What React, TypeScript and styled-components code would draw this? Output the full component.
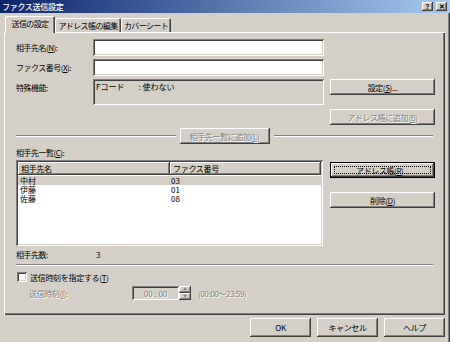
import React from "react";
import styled, { createGlobalStyle, css } from "styled-components";

const FACE = "#d4d0c8";
const SHADOW = "#808080";
const DARK = "#404040";

const GlobalStyle = createGlobalStyle`
	html, body {
		margin: 0;
		padding: 0;
		background: ${FACE};
	}
	body {
		font-family: "Noto Sans CJK JP", "Liberation Sans", sans-serif;
		font-size: 8px;
		color: #000;
	}
	* {
		box-sizing: border-box;
	}
`;

const raised = css`
	background: ${FACE};
	box-shadow: inset -1px -1px ${DARK}, inset 1px 1px #fff, inset -2px -2px ${SHADOW},
		inset 2px 2px ${FACE};
`;

const sunken = css`
	box-shadow: inset 1px 1px ${SHADOW}, inset -1px -1px #fff, inset 2px 2px ${DARK},
		inset -2px -2px ${FACE};
`;

const disabledText = css`
	color: ${SHADOW};
	text-shadow: 1px 1px 0 #fff;
`;

const App = () => {
	const entries = [
		{ name: "中村", fax: "03" },
		{ name: "伊藤", fax: "01" },
		{ name: "佐藤", fax: "08" },
	];
	return (
		<>
			<GlobalStyle />
			<Window>
				<TitleBar>
					<Title>ファクス送信設定</Title>
					<Caps>
						<CapButton>?</CapButton>
						<CapButton>✕</CapButton>
					</Caps>
				</TitleBar>
				<Body>
					<Tabs>
						<Tab $active $w={50}>
							送信の設定
						</Tab>
						<Tab $w={66}>アドレス帳の編集</Tab>
						<Tab $w={50}>カバーシート</Tab>
					</Tabs>
					<Panel>
						<TopSection>
							<Fields>
								<Label>
									相手先名(<u>N</u>):
								</Label>
								<Field />
								<Label>
									ファクス番号(<u>X</u>):
								</Label>
								<Field />
								<Label $top>特殊機能:</Label>
								<StaticBox>
									<span>Fコード</span>
									<span>: 使わない</span>
								</StaticBox>
							</Fields>
							<SideButtons $top={40}>
								<Button>
									設定(<u>S</u>)...
								</Button>
								<Button $disabled>
									アドレス帳に追加(<u>B</u>)
								</Button>
							</SideButtons>
						</TopSection>
						<AddRow>
							<Rule />
							<Button $disabled $w={90}>
								相手先一覧に追加(<u>L</u>)
							</Button>
							<Rule />
						</AddRow>
						<ListLabel>
							相手先一覧(<u>C</u>):
						</ListLabel>
						<ListSection>
							<ListBox>
								<Header>
									<HeaderCell $w={152}>相手先名</HeaderCell>
									<HeaderCell>ファクス番号</HeaderCell>
								</Header>
								{entries.map((e, i) => (
									<Row key={e.name} $selected={i === 0}>
										<Cell $w={152}>{e.name}</Cell>
										<Cell>{e.fax}</Cell>
									</Row>
								))}
							</ListBox>
							<SideButtons $top={2}>
								<Button $focused>
									アドレス帳(<u>R</u>)...
								</Button>
								<Button>
									削除(<u>D</u>)
								</Button>
							</SideButtons>
						</ListSection>
						<CountRow>
							<CountLabel>相手先数:</CountLabel>
							<span>3</span>
						</CountRow>
						<Separator />
						<CheckRow>
							<CheckBox />
							<span>
								送信時刻を指定する(<u>T</u>)
							</span>
						</CheckRow>
						<TimeRow>
							<TimeLabel>
								送信時刻(<u>I</u>):
							</TimeLabel>
							<TimeField>00 : 00</TimeField>
							<Spinner>
								<SpinButton>▲</SpinButton>
								<SpinButton>▼</SpinButton>
							</Spinner>
							<Range>(00:00～23:59)</Range>
						</TimeRow>
					</Panel>
					<Footer>
						<Button $w={61} $h={19}>
							OK
						</Button>
						<Button $w={61} $h={19}>
							キャンセル
						</Button>
						<Button $w={61} $h={19}>
							ヘルプ
						</Button>
					</Footer>
				</Body>
			</Window>
		</>
	);
};

const Window = styled.div`
	width: 450px;
	height: 342px;
	background: ${FACE};
	overflow: hidden;
	box-shadow: inset -1px 0 ${DARK}, inset -2px 0 ${SHADOW};
`;

const TitleBar = styled.div`
	height: 13px;
	display: flex;
	align-items: center;
	justify-content: space-between;
	padding: 0 3px 0 2px;
	background: linear-gradient(to right, #0a246a, #a6caf0);
`;

const Title = styled.div`
	color: #fff;
	font-weight: 500;
	line-height: 13px;
	letter-spacing: -0.3px;
`;

const Caps = styled.div`
	display: flex;
	gap: 3px;
`;

const CapButton = styled.div`
	${raised};
	width: 11px;
	height: 9px;
	display: flex;
	align-items: center;
	justify-content: center;
	font-family: "Liberation Sans", sans-serif;
	font-size: 7px;
	font-weight: bold;
	line-height: 9px;
`;

const Body = styled.div`
	padding: 3px 5px 0 4px;
`;

const Tabs = styled.div`
	display: flex;
	align-items: flex-end;
	height: 16px;
	padding-left: 1px;
	position: relative;
	z-index: 1;
`;

const Tab = styled.div<{ $active?: boolean; $w: number }>`
	width: ${(p) => p.$w}px;
	height: ${(p) => (p.$active ? 17 : 14)}px;
	margin-bottom: ${(p) => (p.$active ? -1 : 0)}px;
	display: flex;
	align-items: center;
	justify-content: center;
	background: ${FACE};
	border-radius: 2px 2px 0 0;
	box-shadow: inset 1px 1px #fff, inset -1px 0 ${DARK}, inset -2px 0 ${SHADOW};
	white-space: nowrap;
	letter-spacing: -0.6px;
	padding-bottom: ${(p) => (p.$active ? 2 : 0)}px;
`;

const Panel = styled.div`
	height: 283px;
	padding: 7px 10px 0 12px;
	background: ${FACE};
	box-shadow: inset 1px 1px #fff, inset -1px -1px ${DARK}, inset -2px -2px ${SHADOW};
`;

const TopSection = styled.div`
	display: flex;
	align-items: flex-start;
`;

const Fields = styled.div`
	width: 308px;
	display: grid;
	grid-template-columns: 77px 231px;
	grid-template-rows: 17px 17px 26px;
	row-gap: 3px;
`;

const Label = styled.div<{ $top?: boolean }>`
	display: flex;
	align-items: ${(p) => (p.$top ? "flex-start" : "center")};
	padding-top: ${(p) => (p.$top ? 3 : 0)}px;
	white-space: nowrap;
	letter-spacing: -0.5px;
`;

const Field = styled.div`
	${sunken};
	background: #fff;
`;

const StaticBox = styled.div`
	${sunken};
	display: flex;
	gap: 14px;
	padding: 3px 3px;
	line-height: 10px;
`;

const SideButtons = styled.div<{ $top: number }>`
	margin-left: auto;
	padding-top: ${(p) => p.$top}px;
	width: 105px;
	display: flex;
	flex-direction: column;
	gap: 14px;
`;

const Button = styled.div<{
	$disabled?: boolean;
	$focused?: boolean;
	$w?: number;
	$h?: number;
}>`
	${raised};
	position: relative;
	width: ${(p) => (p.$w ? `${p.$w}px` : "100%")};
	height: ${(p) => p.$h ?? 16}px;
	display: flex;
	align-items: center;
	justify-content: center;
	white-space: nowrap;
	letter-spacing: -0.4px;
	flex-shrink: 0;
	${(p) => p.$disabled && disabledText};
	${(p) =>
		p.$focused &&
		css`
			box-shadow: inset 0 0 0 1px #000, inset -2px -2px ${DARK}, inset 2px 2px #fff,
				inset -3px -3px ${SHADOW};
			&::after {
				content: "";
				position: absolute;
				inset: 4px;
				border: 1px dotted #000;
			}
		`};
`;

const AddRow = styled.div`
	margin-top: 3px;
	height: 16px;
	display: flex;
	align-items: center;
	gap: 4px;
	padding-right: 2px;
`;

const Rule = styled.div`
	flex: 1;
	height: 2px;
	border-top: 1px solid ${SHADOW};
	border-bottom: 1px solid #fff;
`;

const ListLabel = styled.div`
	height: 16px;
	display: flex;
	align-items: center;
	letter-spacing: -0.5px;
`;

const ListSection = styled.div`
	display: flex;
	align-items: flex-start;
`;

const ListBox = styled.div`
	${sunken};
	width: 307px;
	height: 86px;
	padding: 2px;
	background: #fff;
	overflow: hidden;
`;

const Header = styled.div`
	display: flex;
	height: 13px;
`;

const HeaderCell = styled.div<{ $w?: number }>`
	${raised};
	width: ${(p) => (p.$w ? `${p.$w}px` : "auto")};
	flex: ${(p) => (p.$w ? "none" : 1)};
	padding-left: 3px;
	display: flex;
	align-items: center;
	letter-spacing: -0.3px;
`;

const Row = styled.div<{ $selected?: boolean }>`
	display: flex;
	height: 9px;
	line-height: 9px;
	margin-top: ${(p) => (p.$selected ? 1 : 0)}px;
	background: ${(p) => (p.$selected ? FACE : "transparent")};
`;

const Cell = styled.div<{ $w?: number }>`
	width: ${(p) => (p.$w ? `${p.$w}px` : "auto")};
	height: 9px;
	overflow: hidden;
	padding-left: ${(p) => (p.$w ? 2 : 1)}px;
`;

const CountRow = styled.div`
	height: 16px;
	display: flex;
	align-items: center;
`;

const CountLabel = styled.div`
	width: 80px;
	letter-spacing: -0.5px;
`;

const Separator = styled.div`
	margin-top: 2px;
	margin-right: 2px;
	height: 2px;
	border-top: 1px solid ${SHADOW};
	border-bottom: 1px solid #fff;
`;

const CheckRow = styled.div`
	margin-top: 5px;
	height: 12px;
	display: flex;
	align-items: center;
	gap: 3px;
	letter-spacing: -0.3px;
`;

const CheckBox = styled.div`
	${sunken};
	margin-left: 1px;
	width: 10px;
	height: 10px;
	background: #fff;
`;

const TimeRow = styled.div`
	margin-top: 3px;
	height: 14px;
	display: flex;
	align-items: center;
	padding-left: 13px;
	${disabledText};
`;

const TimeLabel = styled.div`
	width: 103px;
	letter-spacing: -0.4px;
`;

const TimeField = styled.div`
	${sunken};
	width: 47px;
	height: 14px;
	display: flex;
	align-items: center;
	justify-content: center;
`;

const Spinner = styled.div`
	width: 12px;
	height: 14px;
	display: flex;
	flex-direction: column;
`;

const SpinButton = styled.div`
	${raised};
	flex: 1;
	display: flex;
	align-items: center;
	justify-content: center;
	font-size: 4px;
	line-height: 7px;
	text-shadow: none;
`;

const Range = styled.div`
	margin-left: 7px;
	letter-spacing: -0.4px;
`;

const Footer = styled.div`
	margin-top: 3px;
	display: flex;
	justify-content: flex-end;
	gap: 6px;
`;

export default App;
